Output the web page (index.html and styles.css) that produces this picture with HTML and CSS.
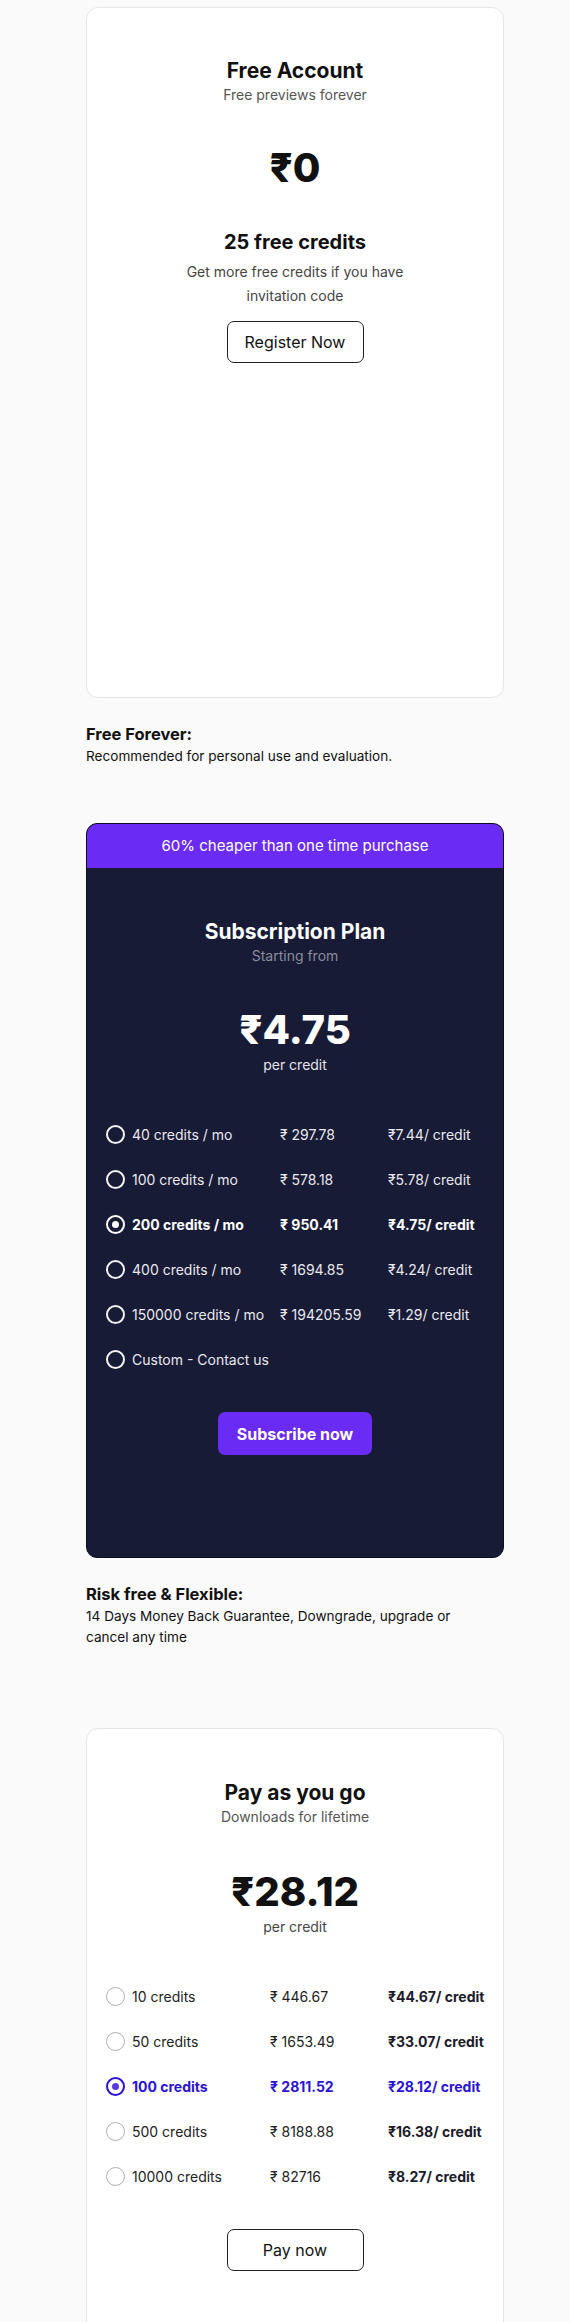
FILE: index.html
```html
<!DOCTYPE html>
<html lang="en">
<head>
<meta charset="utf-8">
<title>Pricing</title>
<link rel="stylesheet" href="styles.css">
</head>
<body>
<main class="page">
  <section class="card card-free">
    <h2 class="plan-title">Free Account</h2>
    <p class="plan-sub">Free previews forever</p>
    <div class="price">₹0</div>
    <h3 class="credits-title">25 free credits</h3>
    <p class="credits-desc">Get more free credits if you have invitation code</p>
    <button class="btn btn-outline btn-register">Register Now</button>
  </section>
  <div class="note">
    <h4 class="note-title">Free Forever:</h4>
    <p class="note-text">Recommended for personal use and evaluation.</p>
  </div>

  <section class="card card-sub">
    <div class="banner">60% cheaper than one time purchase</div>
    <div class="sub-body">
      <h2 class="plan-title">Subscription Plan</h2>
      <p class="plan-sub">Starting from</p>
      <div class="price">₹4.75</div>
      <p class="per-credit">per credit</p>
      <div class="options options-sub">
        <div class="opt"><span class="radio"></span><span class="opt-name">40 credits / mo</span><span class="opt-price">₹ 297.78</span><span class="opt-unit">₹7.44/ credit</span></div>
        <div class="opt"><span class="radio"></span><span class="opt-name">100 credits / mo</span><span class="opt-price">₹ 578.18</span><span class="opt-unit">₹5.78/ credit</span></div>
        <div class="opt selected"><span class="radio"></span><span class="opt-name">200 credits / mo</span><span class="opt-price">₹ 950.41</span><span class="opt-unit">₹4.75/ credit</span></div>
        <div class="opt"><span class="radio"></span><span class="opt-name">400 credits / mo</span><span class="opt-price">₹ 1694.85</span><span class="opt-unit">₹4.24/ credit</span></div>
        <div class="opt"><span class="radio"></span><span class="opt-name">150000 credits / mo</span><span class="opt-price">₹ 194205.59</span><span class="opt-unit">₹1.29/ credit</span></div>
        <div class="opt"><span class="radio"></span><span class="opt-name">Custom - Contact us</span></div>
      </div>
      <button class="btn btn-primary">Subscribe now</button>
    </div>
  </section>
  <div class="note">
    <h4 class="note-title">Risk free &amp; Flexible:</h4>
    <p class="note-text note-wide">14 Days Money Back Guarantee, Downgrade, upgrade or cancel any time</p>
  </div>

  <section class="card card-pay">
    <h2 class="plan-title">Pay as you go</h2>
    <p class="plan-sub">Downloads for lifetime</p>
    <div class="price">₹28.12</div>
    <p class="per-credit">per credit</p>
    <div class="options options-pay">
      <div class="opt"><span class="radio"></span><span class="opt-name">10 credits</span><span class="opt-price">₹ 446.67</span><span class="opt-unit">₹44.67/ credit</span></div>
      <div class="opt"><span class="radio"></span><span class="opt-name">50 credits</span><span class="opt-price">₹ 1653.49</span><span class="opt-unit">₹33.07/ credit</span></div>
      <div class="opt selected"><span class="radio"></span><span class="opt-name">100 credits</span><span class="opt-price">₹ 2811.52</span><span class="opt-unit">₹28.12/ credit</span></div>
      <div class="opt"><span class="radio"></span><span class="opt-name">500 credits</span><span class="opt-price">₹ 8188.88</span><span class="opt-unit">₹16.38/ credit</span></div>
      <div class="opt"><span class="radio"></span><span class="opt-name">10000 credits</span><span class="opt-price">₹ 82716</span><span class="opt-unit">₹8.27/ credit</span></div>
    </div>
    <button class="btn btn-outline">Pay now</button>
  </section>
</main>
</body>
</html>
```

FILE: styles.css
```css
* { box-sizing: border-box; }
html, body { margin: 0; padding: 0; }
body {
  background: #fafafa;
  font-family: Inter, "Noto Sans", "DejaVu Sans", sans-serif;
  color: #111;
}
.page {
  width: 418px;
  margin-left: 86px;
  padding-top: 7px;
}
h2, h3, h4, p { margin: 0; }

.card {
  border: 1px solid #e6e6e6;
  border-radius: 12px;
  background: #fff;
  display: flex;
  flex-direction: column;
  align-items: center;
  text-align: center;
}
.card-free {
  height: 691px;
  padding-top: 49px;
}
.plan-title {
  font-size: 21px;
  line-height: 28px;
  font-weight: 700;
  color: #111;
}
.plan-sub {
  font-size: 14px;
  line-height: 20px;
  color: #555;
}
.price {
  font-size: 40px;
  line-height: 50px;
  font-weight: 800;
  margin-top: 38px;
  color: #111;
}
.credits-title {
  font-size: 20px;
  line-height: 26px;
  font-weight: 700;
  margin-top: 36px;
}
.credits-desc {
  font-size: 14px;
  line-height: 24px;
  color: #444;
  margin-top: 5px;
  max-width: 225px;
}
.btn {
  font-family: inherit;
  font-size: 16px;
  border-radius: 7px;
  cursor: pointer;
}
.btn-outline {
  width: 137px;
  height: 42px;
  background: #fff;
  border: 1px solid #222;
  color: #111;
  margin-top: 13px;
}
.note { margin-top: 25px; }
.note-title {
  font-size: 16.5px;
  line-height: 22px;
  font-weight: 700;
}
.note-text {
  font-size: 13.6px;
  line-height: 21px;
  color: #111;
  margin-top: 1px;
}
.note-wide { max-width: 385px; }

.card-sub {
  margin-top: 56px;
  background: #181b36;
  border: 1px solid #0c0d24;
  border-radius: 11px;
  overflow: hidden;
  height: 735px;
}
.banner {
  width: 100%;
  height: 44px;
  background: #6a2cf5;
  color: #fff;
  font-size: 15px;
  line-height: 44px;
}
.sub-body {
  display: flex;
  flex-direction: column;
  align-items: center;
  width: 100%;
  padding-top: 50px;
}
.card-sub .plan-title { color: #fff; }
.card-sub .plan-sub { color: #8a8c9c; }
.card-sub .price { color: #fff; margin-top: 39px; }
.per-credit {
  font-size: 14px;
  line-height: 20px;
  color: #444;
}
.card-sub .per-credit { color: #e4e4ea; }

.options {
  width: 100%;
  margin-top: 37px;
  padding-left: 19px;
  text-align: left;
}
.opt {
  display: grid;
  align-items: center;
  height: 45px;
  font-size: 14px;
}
.options-sub .opt { grid-template-columns: 26px 148px 108px 1fr; color: #e8e8ee; }
.options-pay .opt { grid-template-columns: 26px 138px 118px 1fr; color: #222; }
.radio {
  width: 19px;
  height: 19px;
  border-radius: 50%;
  display: flex;
  align-items: center;
  justify-content: center;
}
.options-sub .radio { border: 2px solid #f2f2f2; }
.options-pay .radio { border: 1.5px solid #b0b0b0; }
.opt.selected .radio::after {
  content: "";
  width: 7px;
  height: 7px;
  border-radius: 50%;
  background: currentColor;
}
.options-sub .opt.selected { color: #fff; font-weight: 700; }
.options-sub .opt.selected .radio { border-color: #fff; }
.options-pay .opt-unit { font-weight: 700; color: #1b1b2b; }
.options-pay .opt.selected { color: #2a13d4; font-weight: 700; }
.options-pay .opt.selected .opt-unit { color: #2a13d4; }
.options-pay .opt.selected .radio { border: 2px solid #2a13d4; }
.options-pay .opt.selected .radio::after { background: #5a3ae0; }

.btn-primary {
  margin-top: 30px;
  width: 154px;
  height: 43px;
  border: none;
  background: #6a2cf5;
  color: #fff;
  font-weight: 700;
}
.card-pay {
  margin-top: 80px;
  padding-top: 50px;
  padding-bottom: 110px;
}
.card-pay .price { margin-top: 40px; }
.card-pay .btn-outline { margin-top: 30px; }
```
